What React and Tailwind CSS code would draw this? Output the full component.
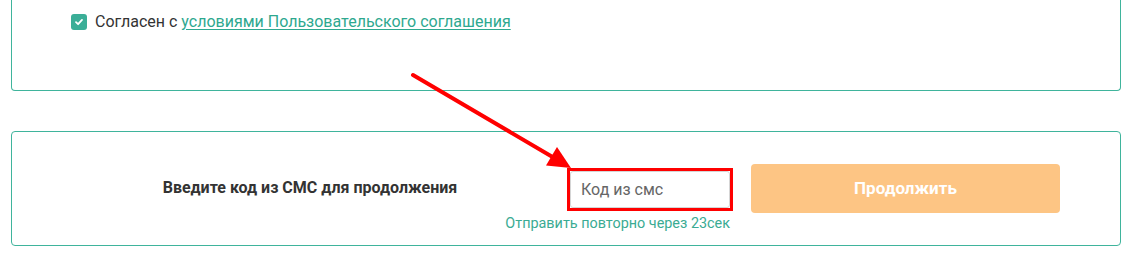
export default function App() {
  return (
    <div className="relative w-[1128px] h-[253px] bg-white overflow-hidden" style={{ fontFamily: "Roboto, 'Liberation Sans', sans-serif" }}>
      {/* верхний блок с соглашением */}
      <div className="ml-[11px] w-[1110px] h-[91px] border border-t-0 border-[#3fb49c] rounded-b-[4px] pl-[59px] pt-[14px]">
        <label className="flex items-center">
          <span className="flex items-center justify-center w-[16px] h-[16px] rounded-[3px] bg-[#3aae97]">
            <svg width="10" height="10" viewBox="0 0 10 10">
              <path d="M2 5.2 L4.1 7.2 L8 2.9" fill="none" stroke="white" strokeWidth="1.8" strokeLinecap="round" strokeLinejoin="round" />
            </svg>
          </span>
          <span className="ml-[8px] text-[16px] leading-[16px] text-[#333]">
            Согласен с <a href="#" className="text-[#2ea88f] underline underline-offset-2">условиями Пользовательского соглашения</a>
          </span>
        </label>
      </div>

      {/* блок ввода кода */}
      <div className="mt-[40px] ml-[11px] w-[1110px] h-[115px] border border-[#3fb49c] rounded-[4px] pt-[32px] flex items-start">
        <div className="ml-[98px] w-[400px] mt-[13px] text-center text-[16px] leading-[22px] font-bold text-[#333]">
          Введите код из СМС для продолжения
        </div>
        <div className="ml-[57px] w-[166px] mt-[4px] flex flex-col items-end">
          <div className="w-[166px] h-[43px] border-[3px] border-[#ff0000]">
            <input
              className="w-full h-full border border-[#d5d5d5] rounded-[3px] px-[10px] text-[16px] text-[#555] placeholder:text-[#666] outline-none"
              placeholder="Код из смс"
            />
          </div>
          <div className="mt-[4px] whitespace-nowrap text-[14.4px] leading-[17px] text-[#3aab93] mr-[3px]">
            Отправить повторно через 23сек
          </div>
        </div>
        <button className="ml-[18px] w-[309px] h-[49px] rounded-[4px] bg-[#fdc584] text-white font-bold text-[17px]">
          Продолжить
        </button>
      </div>

      {/* стрелка-указатель */}
      <svg className="absolute left-0 top-0 pointer-events-none" width="1128" height="253">
        <line x1="413" y1="75" x2="556" y2="159" stroke="#ff0000" strokeWidth="4" strokeLinecap="round" />
        <polygon points="571,168 546,165.5 557,147" fill="#ff0000" />
      </svg>
    </div>
  );
}
